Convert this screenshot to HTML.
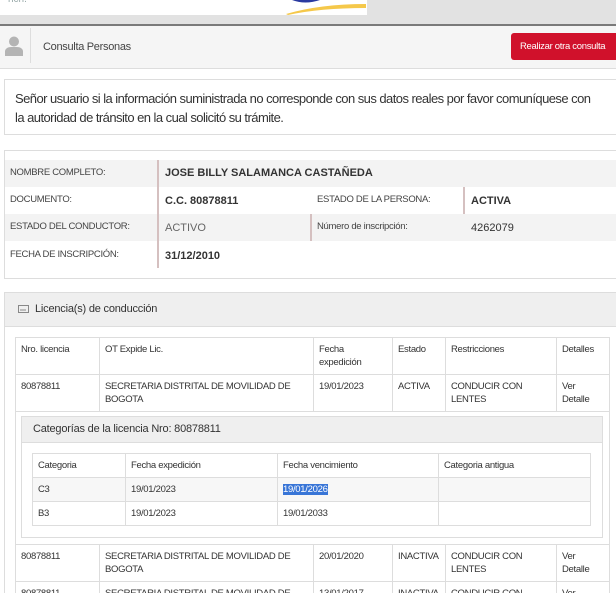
<!DOCTYPE html>
<html><head><meta charset="utf-8"><style>
*{box-sizing:border-box;margin:0;padding:0}
html,body{width:616px;height:593px;overflow:hidden}
body{background:#fff;font-family:"Liberation Sans",Arial,sans-serif;color:#333;position:relative}
.a{position:absolute;white-space:nowrap}
.t{font-size:9.5px;color:#444;letter-spacing:-0.3px}
table{border-collapse:collapse;position:absolute;font-size:9.5px;color:#333;letter-spacing:-0.3px;table-layout:fixed}
td{border:1px solid #ddd;vertical-align:top;padding:5px 5px;line-height:13px;overflow:hidden}
</style></head><body>
<div class="a" style="left:0;top:0;width:616px;height:25px;background:#e2e2e2"></div>
<div class="a" style="left:0;top:0;width:367px;height:15px;background:#fff"></div>
<div class="a" style="left:8px;top:-6px;font-size:10px;color:#9aa">ncn.</div>
<svg class="a" style="left:280px;top:0" width="87" height="15"><path d="M12 0 Q25 5 40 0" fill="#2a3aa0"/><path d="M6 14 Q40 4 86 4 L86 8 Q40 8 8 15Z" fill="#f5c84a"/></svg>
<div class="a" style="left:0;top:24px;width:616px;height:2px;background:#7a7a7a"></div>
<div class="a" style="left:0;top:26px;width:616px;height:43px;background:#f5f5f5;border-bottom:1px solid #ddd"></div>
<svg class="a" style="left:5px;top:36px" width="18" height="20"><circle cx="9" cy="5.5" r="5" fill="#b4b4b4"/><path d="M0 20 L0 15 Q1 11 6 11 L12 11 Q17 11 18 15 L18 20Z" fill="#b4b4b4"/></svg>
<div class="a" style="left:30px;top:28px;width:1px;height:35px;background:#ddd"></div>
<div class="a" style="left:43px;top:41px;font-size:11px;color:#444;letter-spacing:-0.3px">Consulta Personas</div>
<div class="a" style="left:511px;top:33px;width:105px;height:27px;background:#d0112b;border-radius:3px 0 0 3px;color:#fff;font-size:9.5px;letter-spacing:-0.3px;line-height:27px;padding-left:9px">Realizar otra consulta</div>

<div class="a" style="left:4px;top:79px;width:614px;height:56px;border:1px solid #ddd"></div>
<div class="a" style="left:15px;top:89px;font-size:13px;line-height:19px;color:#333;letter-spacing:-0.55px;white-space:normal;width:600px">Señor usuario si la información suministrada no corresponde con sus datos reales por favor comuníquese con<br>la autoridad de tránsito en la cual solicitó su trámite.</div>

<div class="a" style="left:4px;top:150px;width:614px;height:129px;border:1px solid #ddd"></div>
<div class="a" style="left:5px;top:160px;width:611px;height:27px;background:#f3f3f3"></div>
<div class="a" style="left:5px;top:214px;width:611px;height:27px;background:#f3f3f3"></div>
<div class="a" style="left:157px;top:160px;width:2px;height:27px;background:#d5c0c0"></div>
<div class="a" style="left:157px;top:187px;width:2px;height:27px;background:#d5c0c0"></div>
<div class="a" style="left:157px;top:214px;width:2px;height:27px;background:#d5c0c0"></div>
<div class="a" style="left:157px;top:241px;width:2px;height:27px;background:#d5c0c0"></div>
<div class="a" style="left:310px;top:214px;width:2px;height:27px;background:#d5c0c0"></div>
<div class="a" style="left:463px;top:187px;width:2px;height:27px;background:#d5c0c0"></div>
<div class="a t" style="left:10px;top:167px">NOMBRE COMPLETO:</div>
<div class="a" style="left:165px;top:167px;font-size:11px;font-weight:bold">JOSE BILLY SALAMANCA CASTAÑEDA</div>
<div class="a t" style="left:10px;top:194px">DOCUMENTO:</div>
<div class="a" style="left:165px;top:195px;font-size:11px;font-weight:bold">C.C. 80878811</div>
<div class="a t" style="left:317px;top:194px">ESTADO DE LA PERSONA:</div>
<div class="a" style="left:471px;top:195px;font-size:11px;font-weight:bold">ACTIVA</div>
<div class="a t" style="left:10px;top:221px">ESTADO DEL CONDUCTOR:</div>
<div class="a" style="left:165px;top:222px;font-size:11px;color:#666">ACTIVO</div>
<div class="a t" style="left:317px;top:221px">Número de inscripción:</div>
<div class="a" style="left:471px;top:222px;font-size:11px">4262079</div>
<div class="a t" style="left:10px;top:249px">FECHA DE INSCRIPCIÓN:</div>
<div class="a" style="left:165px;top:250px;font-size:11px;font-weight:bold">31/12/2010</div>

<div class="a" style="left:4px;top:292px;width:614px;height:310px;border:1px solid #ddd"></div>
<div class="a" style="left:5px;top:293px;width:611px;height:34px;background:#efefef;border-bottom:1px solid #ddd"></div>
<svg class="a" style="left:18px;top:305px" width="11" height="8"><rect x=".5" y=".5" width="10" height="7" fill="none" stroke="#888"/><path d="M2 5h6" stroke="#888"/></svg>
<div class="a" style="left:35px;top:303px;font-size:11px;color:#333;letter-spacing:-0.2px">Licencia(s) de conducción</div>

<table style="left:15px;top:337px;width:595px">
<col style="width:84px"><col style="width:214px"><col style="width:79px"><col style="width:53px"><col style="width:111px"><col>
<tr style="height:37px"><td>Nro. licencia</td><td>OT Expide Lic.</td><td>Fecha<br>expedición</td><td>Estado</td><td>Restricciones</td><td>Detalles</td></tr>
<tr style="height:36px"><td>80878811</td><td>SECRETARIA DISTRITAL DE MOVILIDAD DE BOGOTA</td><td>19/01/2023</td><td>ACTIVA</td><td>CONDUCIR CON LENTES</td><td>Ver Detalle</td></tr>
<tr style="height:133px"><td colspan="6" style="padding:0"></td></tr>
<tr style="height:36px"><td>80878811</td><td>SECRETARIA DISTRITAL DE MOVILIDAD DE BOGOTA</td><td>20/01/2020</td><td>INACTIVA</td><td>CONDUCIR CON LENTES</td><td>Ver Detalle</td></tr>
<tr style="height:36px"><td>80878811</td><td>SECRETARIA DISTRITAL DE MOVILIDAD DE BOGOTA</td><td>13/01/2017</td><td>INACTIVA</td><td>CONDUCIR CON LENTES</td><td>Ver Detalle</td></tr>
</table>
<div class="a" style="left:21px;top:416px;width:582px;height:122px;border:1px solid #ddd"></div>
<div class="a" style="left:22px;top:417px;width:580px;height:26px;background:#efefef;border-bottom:1px solid #ddd"></div>
<div class="a" style="left:33px;top:423px;font-size:11px;letter-spacing:-0.2px">Categorías de la licencia Nro: 80878811</div>
<table style="left:32px;top:453px;width:559px">
<col style="width:93px"><col style="width:152px"><col style="width:161px"><col>
<tr style="height:24px"><td>Categoria</td><td>Fecha expedición</td><td>Fecha vencimiento</td><td>Categoria antigua</td></tr>
<tr style="height:24px;background:#f7f7f7"><td>C3</td><td>19/01/2023</td><td><span style="background:#3875d7;color:#fff">19/01/2026</span></td><td></td></tr>
<tr style="height:24px"><td>B3</td><td>19/01/2023</td><td>19/01/2033</td><td></td></tr>
</table>
</body></html>
